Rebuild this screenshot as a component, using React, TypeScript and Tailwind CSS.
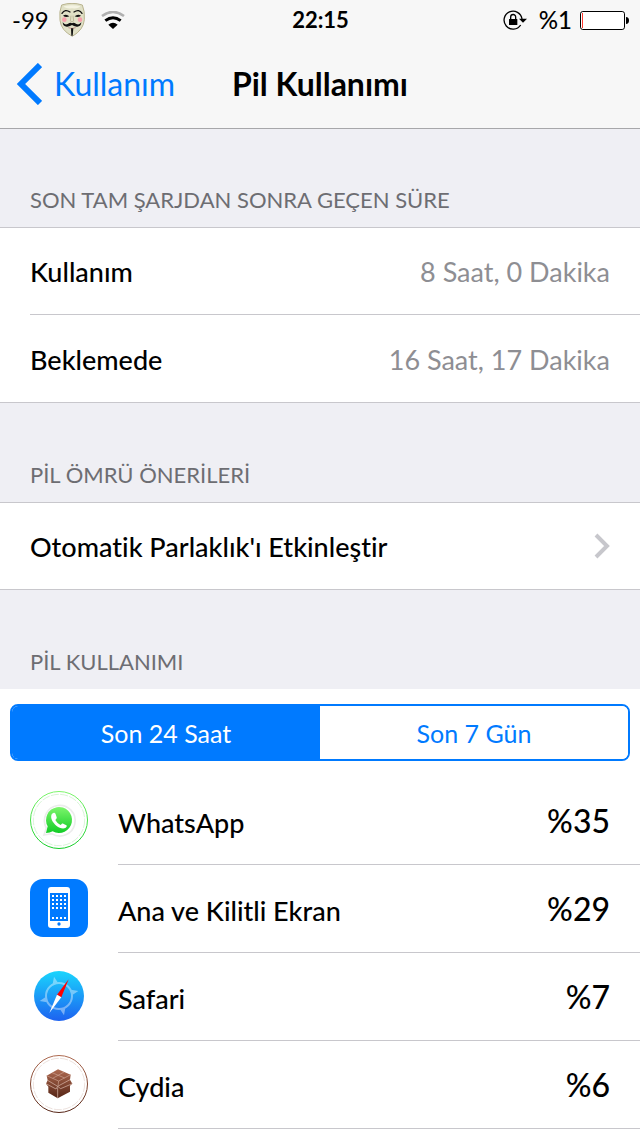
import { useState } from 'react';

interface AppUsage {
  name: string;
  percent: number;
  Icon: () => React.JSX.Element;
}

function MaskIcon() {
  return (
    <svg viewBox="0 0 78 102" className="w-[26px] h-[34px]" aria-hidden="true">
      <path d="M8 6Q39 -4 70 6Q78 24 76 50Q74 80 40 100Q6 82 3 52Q0 24 8 6Z" fill="#e0e0c6" stroke="#b9b48f" strokeWidth="3" />
      <path d="M14 10Q39 3 64 10Q58 18 39 16Q20 18 14 10Z" fill="#f4f3e2" />
      <circle cx="16" cy="50" r="7" fill="#f7a0ac" />
      <circle cx="63" cy="50" r="7" fill="#f7a0ac" />
      <path d="M9 31Q18 17 33 27M69 31Q60 17 45 27" fill="none" stroke="#111" strokeWidth="4" strokeLinecap="round" />
      <path d="M12 38Q22 32 31 40Q21 45 12 38ZM66 38Q56 32 47 40Q57 45 66 38Z" fill="#111" />
      <path d="M36 38L34 54Q39 59 44 54L42 38" fill="none" stroke="#aaa684" strokeWidth="2" />
      <path d="M11 58Q17 67 26 63Q35 57 39 61Q43 57 52 63Q61 67 67 58Q66 72 53 71Q44 70 39 66Q34 70 25 71Q12 72 11 58Z" fill="#111" />
      <path d="M28 74Q39 79 50 74" fill="none" stroke="#b06a6a" strokeWidth="2" />
      <path d="M36 76H43L41 98H37Z" fill="#111" />
    </svg>
  );
}

function WifiIcon() {
  return (
    <svg viewBox="0 0 72 54" className="w-6 h-[18px]" aria-label="Wi-Fi">
      <path d="M3 15Q36 -9 69 15" fill="none" stroke="#b0b0b0" strokeWidth="8" />
      <path d="M13 29Q36 12 59 29" fill="none" stroke="#000" strokeWidth="9" />
      <path d="M22 41Q36 30 50 41L36 54Z" />
    </svg>
  );
}

function RotationLockIcon() {
  return (
    <svg viewBox="0 0 72 60" className="w-6 h-5" aria-label="Yön kilidi">
      <path d="M53 45A27 27 0 1 1 57 27" fill="none" stroke="#000" strokeWidth="4" />
      <path d="M48 26H72L60 38Z" />
      <rect x="18" y="27" width="25" height="18" rx="1" />
      <path d="M23 28V21A7 7 0 0 1 38 21V28" fill="none" stroke="#000" strokeWidth="4" />
    </svg>
  );
}

function BatteryIcon() {
  return (
    <svg viewBox="0 0 147 57" className="w-[49px] h-[19px]" aria-label="Pil">
      <rect x="1.5" y="1.5" width="132" height="54" rx="7" fill="#fff" stroke="#000" strokeWidth="3" />
      <rect x="6" y="6" width="3" height="45" fill="#ff3b30" />
      <path d="M138 18Q147 19 147 28.500Q147 38 138 39Z" />
    </svg>
  );
}

function WhatsAppIcon() {
  return (
    <svg viewBox="0 0 174 174" className="size-full">
      <defs>
        <linearGradient id="wa" x1="0" y1="0" x2="0" y2="1">
          <stop offset="0" stopColor="#7df56c" />
          <stop offset="1" stopColor="#12cc26" />
        </linearGradient>
      </defs>
      <circle cx="87" cy="87" r="85.500" fill="#fff" stroke="url(#wa)" strokeWidth="3" />
      <circle cx="87" cy="87" r="77" fill="none" stroke="#c5efc4" strokeWidth="2" strokeDasharray="24 4" />
      <path d="M42 132L49 111A46 46 0 1 1 65 128Z" fill="#fff" stroke="#ececec" strokeWidth="5" />
      <path d="M48 126L53 106A39 39 0 1 1 68 121Q60 126 48 126Z" fill="url(#wa)" />
      <path d="M65 70C69 64 75 64 77 70L80 79C81 82 79 84 76 87C80 94 85 99 92 102C95 98 97 96 100 98L109 103C112 105 110 109 106 111C98 114 88 111 79 104C68 95 60 82 65 70Z" fill="#fff" />
    </svg>
  );
}

function HomeScreenIcon() {
  return (
    <svg viewBox="0 0 174 174" className="size-full">
      <rect width="174" height="174" rx="39" fill="#007aff" />
      <rect x="54" y="24" width="66" height="123" rx="9" fill="#fff" />
      <rect x="60" y="42" width="54" height="84" fill="#007aff" />
      {[48, 60, 72, 84, 114].map((y) =>
        [66, 78, 90, 102].map((x) => <rect key={`${x}-${y}`} x={x} y={y} width="6" height="6" fill="#fff" />)
      )}
      <circle cx="87" cy="135" r="5" fill="#007aff" />
    </svg>
  );
}

function SafariIcon() {
  return (
    <svg viewBox="0 0 174 174" className="size-full">
      <defs>
        <linearGradient id="sf" x1="0" y1="0" x2="0" y2="1">
          <stop offset="0" stopColor="#1ad5fd" />
          <stop offset="1" stopColor="#1d62f0" />
        </linearGradient>
      </defs>
      <circle cx="87" cy="87" r="75" fill="url(#sf)" />
      <g opacity="0.4">
        <circle cx="87" cy="87" r="39" fill="none" stroke="#fff" strokeWidth="6" />
        <path d="M72 29L84 47L68 51ZM145 72L127 84L123 68ZM102 145L90 127L106 123ZM29 102L47 90L51 106Z" fill="#fff" />
      </g>
      <path d="M116 37L94 91L81 83Z" fill="#f00" />
      <path d="M58 138L94 91L81 83Z" fill="#fff" />
    </svg>
  );
}

function CydiaIcon() {
  return (
    <svg viewBox="0 0 174 174" className="size-full">
      <defs>
        <linearGradient id="cy" x1="0" y1="0" x2="0" y2="1">
          <stop offset="0" stopColor="#ae6a50" />
          <stop offset="1" stopColor="#552415" />
        </linearGradient>
      </defs>
      <circle cx="87" cy="87" r="85.500" fill="#fff" stroke="url(#cy)" strokeWidth="3" />
      <circle cx="87" cy="87" r="77" fill="none" stroke="#e3d2cc" strokeWidth="2" strokeDasharray="24 4" />
      <path d="M50 62L84 43L122 59L120 74L127 86L120 92V110L83 130L55 113V95L48 86L53 76Z" fill="url(#cy)" />
      <path d="M53 76L83 94L120 74M48 86L78 102L83 94L92 101L127 86M83 98V130" fill="none" stroke="#dcbdb1" strokeWidth="2" />
      <path d="M50 62L86 78L122 59M66 53L104 69M102 51L68 70M86 78L84 92" fill="none" stroke="#cfa392" strokeWidth="2" />
    </svg>
  );
}

const usage: AppUsage[] = [
  { name: 'WhatsApp', percent: 35, Icon: WhatsAppIcon },
  { name: 'Ana ve Kilitli Ekran', percent: 29, Icon: HomeScreenIcon },
  { name: 'Safari', percent: 7, Icon: SafariIcon },
  { name: 'Cydia', percent: 6, Icon: CydiaIcon },
];

const times = [
  { label: 'Kullanım', value: '8 Saat, 0 Dakika' },
  { label: 'Beklemede', value: '16 Saat, 17 Dakika' },
];

const ranges = ['Son 24 Saat', 'Son 7 Gün'];

function SectionTitle({ children }: { children: string }) {
  return <h2 className="px-[30px] pt-[57px] pb-3 text-[22px] leading-[30px] text-[#6d6d72]">{children}</h2>;
}

export default function App() {
  const [range, setRange] = useState(ranges[0]);

  return (
    <div className="min-h-screen bg-white font-['Lato',sans-serif] text-[27px] leading-9 text-black [font-variant-ligatures:none]">
      <header className="relative bg-[#f7f7f7] shadow-[0_1px_0_#a7a7aa]">
        <div className="grid grid-cols-[1fr_auto_1fr] items-center h-10 pl-3 pr-[11px] text-[22px]">
          <div className="flex items-center">
            <span className="w-9 text-2xl">-99</span>
            <span className="ml-[11px] mr-4"><MaskIcon /></span>
            <WifiIcon />
          </div>
          <time className="font-bold">22:15</time>
          <div className="flex items-center justify-end">
            <RotationLockIcon />
            <span className="ml-3 mr-2 text-2xl font-medium">%1</span>
            <BatteryIcon />
          </div>
        </div>
        <nav className="grid grid-cols-[1fr_auto_1fr] items-center h-[88px] px-4">
          <a href="#" className="flex items-center gap-3 text-[32px] text-[#007aff]">
            <svg viewBox="0 0 26 42" className="w-[26px] h-[42px]" aria-hidden="true">
              <path d="M24 2L5 21L24 40" fill="none" stroke="currentColor" strokeWidth="6" />
            </svg>
            Kullanım
          </a>
          <h1 className="text-[32px] font-bold">Pil Kullanımı</h1>
        </nav>
      </header>

      <main>
        <section className="bg-[#efeff4]">
          <SectionTitle>SON TAM ŞARJDAN SONRA GEÇEN SÜRE</SectionTitle>
          <dl className="bg-white border-y border-[#c8c7cc] pl-[30px] divide-y divide-[#c8c7cc]">
            {times.map((t) => (
              <div key={t.label} className="flex items-center justify-between h-[87px] pt-0.5 pr-[30px]">
                <dt className="font-medium">{t.label}</dt>
                <dd className="text-[#8e8e93]">{t.value}</dd>
              </div>
            ))}
          </dl>
        </section>

        <section className="bg-[#efeff4]">
          <SectionTitle>PİL ÖMRÜ ÖNERİLERİ</SectionTitle>
          <a href="#" className="flex items-center justify-between h-[88px] px-[30px] bg-white border-y border-[#c8c7cc] font-medium">
            <span className="pt-0.5">Otomatik Parlaklık'ı Etkinleştir</span>
            <svg viewBox="0 0 16 26" className="w-4 h-[26px]" aria-hidden="true">
              <path d="M2 2L13 13L2 24" fill="none" stroke="#c7c7cc" strokeWidth="4" />
            </svg>
          </a>
        </section>

        <section>
          <div className="bg-[#efeff4]">
            <SectionTitle>PİL KULLANIMI</SectionTitle>
          </div>
          <div className="px-[10px] pt-[15px] pb-4">
            <div className="grid grid-cols-2 h-[57px] border-2 border-[#007aff] rounded-lg overflow-hidden">
              {ranges.map((r) => (
                <button
                  key={r}
                  onClick={() => setRange(r)}
                  aria-pressed={range === r}
                  className={`text-[25px] ${range === r ? 'bg-[#007aff] text-white' : 'bg-white text-[#007aff]'}`}
                >
                  {r}
                </button>
              ))}
            </div>
          </div>
          <ul>
            {usage.map(({ name, percent, Icon }) => (
              <li key={name} className="flex gap-[30px] pl-[30px]">
                <span className="size-[58px] mt-[14px] shrink-0"><Icon /></span>
                <div className="flex flex-1 items-center justify-between h-[88px] pr-[30px] border-b border-[#c8c7cc] font-medium">
                  <span className="pt-1">{name}</span>
                  <span className="text-[32px]">%{percent}</span>
                </div>
              </li>
            ))}
          </ul>
        </section>
      </main>
    </div>
  );
}
